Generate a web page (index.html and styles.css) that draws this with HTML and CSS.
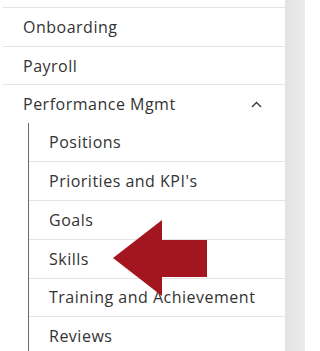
FILE: index.html
```html
<!DOCTYPE html>
<html>
<head>
<meta charset="utf-8">
<link rel="stylesheet" href="styles.css">
</head>
<body>
<div class="page">
  <nav class="nav">
    <ul class="menu">
      <li class="item">Onboarding</li>
      <li class="item">Payroll</li>
      <li class="item open">
        <div class="item-head">
          <span>Performance Mgmt</span>
          <svg class="chev" width="11" height="7" viewBox="0 0 11 7"><path d="M1 6 L5.5 1.5 L10 6" fill="none" stroke="#333" stroke-width="1.3"/></svg>
        </div>
        <ul class="sub">
          <li class="sub-item">Positions</li>
          <li class="sub-item">Priorities and KPI's</li>
          <li class="sub-item">Goals</li>
          <li class="sub-item">Skills</li>
          <li class="sub-item">Training and Achievement</li>
          <li class="sub-item">Reviews</li>
        </ul>
      </li>
    </ul>
  </nav>
  <div class="gutter"></div>
  <svg class="arrow" width="305" height="351" viewBox="0 0 305 351"><polygon points="113,258 162,220 162,240 207,240 207,277 162,277 162,296" fill="#a3161f"/></svg>
</div>
</body>
</html>
```
FILE: styles.css
```css
html, body {
  margin: 0;
  padding: 0;
}
body {
  font-family: "Open Sans", "Liberation Sans", sans-serif;
  font-size: 16px;
  letter-spacing: 0.5px;
  color: #333;
  background: #fff;
}
.page {
  display: flex;
  width: 305px;
  height: 351px;
  overflow: hidden;
  position: relative;
}
.nav {
  width: 285px;
  flex: none;
  background: #fff;
  padding-top: 7px;
}
.gutter {
  flex: 1;
  background: linear-gradient(to right, #e2e2e2, #ececec);
}
.menu {
  list-style: none;
  margin: 0 0 0 3px;
  padding: 0;
  border-top: 1px solid #e4e4e4;
}
.item {
  border-bottom: 1px solid #e4e4e4;
}
.menu > .item:not(.open) {
  height: 37.7px;
  display: flex;
  align-items: center;
  padding-left: 20px;
}
.item.open {
  border-bottom: none;
}
.item-head {
  height: 38px;
  display: flex;
  align-items: center;
  justify-content: space-between;
  padding-left: 20px;
  padding-right: 23px;
}
.chev {
  display: block;
}
.sub {
  list-style: none;
  margin: 0 0 0 25px;
  padding: 0;
  border-left: 1px solid #6a6a6a;
}
.sub-item {
  height: 37.8px;
  display: flex;
  align-items: center;
  padding-left: 20px;
  border-bottom: 1px solid #e4e4e4;
}
.arrow {
  position: absolute;
  left: 0;
  top: 0;
  pointer-events: none;
}
```
